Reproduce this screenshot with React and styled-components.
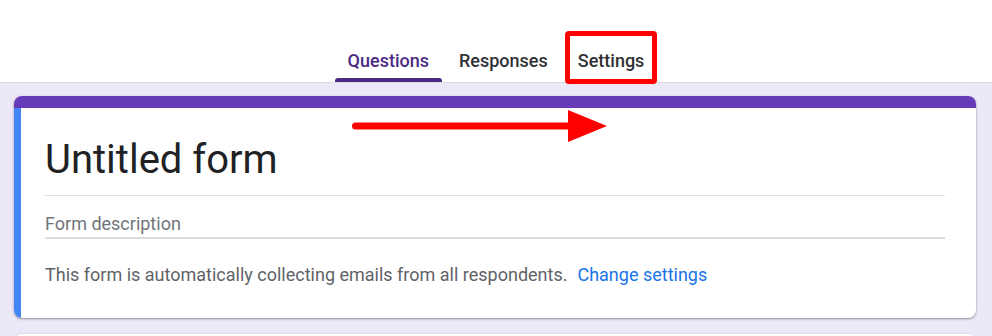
import React from 'react'
import styled, { createGlobalStyle, css } from 'styled-components'

const GlobalStyle = createGlobalStyle`
  html, body {
    margin: 0;
    padding: 0;
    background: #ede8f7;
    font-family: Roboto, "Liberation Sans", Arial, sans-serif;
  }
`

const Header = styled.header`
  background: #fff;
  border-bottom: 1px solid #dadce0;
  height: 82px;
  display: flex;
  justify-content: center;
  align-items: flex-end;
`

const Tabs = styled.nav`
  display: flex;
  gap: 4px;
`

const Tab = styled.div`
  position: relative;
  height: 44px;
  padding: 0 13px;
  display: flex;
  align-items: center;
  font-size: 18px;
  font-weight: 500;
  color: #303134;
  cursor: pointer;

  ${p =>
    p.active &&
    css`
      color: #4b2a85;
      &::before {
        content: '';
        position: absolute;
        left: 0;
        right: 0;
        bottom: 0;
        height: 4px;
        border-radius: 3px 3px 0 0;
        background: #4b2a85;
      }
    `}

  ${p =>
    p.highlight &&
    css`
      &::after {
        content: '';
        position: absolute;
        left: 0;
        right: 0;
        top: -7px;
        bottom: -2px;
        border: 5px solid #ff0000;
        border-radius: 4px;
      }
    `}
`

const Main = styled.main`
  padding: 13px 16px 0 14px;
  display: flex;
  flex-direction: column;
  gap: 16px;
`

const Card = styled.section`
  position: relative;
  background: #fff;
  border-radius: 8px;
  box-shadow: 0 1px 2px rgba(0, 0, 0, 0.3), 0 1px 3px 1px rgba(0, 0, 0, 0.08);
  overflow: hidden;
  min-height: ${p => p.minHeight || 0}px;
`

const TopBar = styled.div`
  height: 12px;
  background: #673ab7;
`

const Body = styled.div`
  border-left: 7px solid #4285f4;
  padding: 28px 31px 31px 24px;
`

const Title = styled.h1`
  margin: 0;
  font-size: 40px;
  font-weight: 400;
  line-height: 48px;
  color: #202124;
  padding-bottom: 11px;
  border-bottom: 1px solid #e0e0e0;
`

const Description = styled.div`
  margin-top: 16px;
  font-size: 18px;
  line-height: 24px;
  color: #70757a;
  padding-bottom: 1px;
  border-bottom: 2px solid #dcdcdc;
`

const Notice = styled.p`
  margin: 24px 0 0;
  font-size: 18px;
  line-height: 24px;
  color: #5f6368;
`

const Link = styled.a`
  margin-left: 10px;
  color: #1a73e8;
  text-decoration: none;
`

const Arrow = styled.svg`
  position: absolute;
  left: 334px;
  top: 13px;
  pointer-events: none;
`

export default function App() {
  return (
    <>
      <GlobalStyle />
      <Header>
        <Tabs>
          <Tab active>Questions</Tab>
          <Tab>Responses</Tab>
          <Tab highlight>Settings</Tab>
        </Tabs>
      </Header>
      <Main>
        <Card>
          <TopBar />
          <Body>
            <Title>Untitled form</Title>
            <Description>Form description</Description>
            <Notice>
              This form is automatically collecting emails from all respondents.
              <Link href="#">Change settings</Link>
            </Notice>
          </Body>
          <Arrow width="262" height="34" viewBox="0 0 262 34">
            <line x1="7.5" y1="17" x2="224" y2="17" stroke="#ff0000" strokeWidth="7" strokeLinecap="round" />
            <polygon points="220,1 259,17 220,33" fill="#ff0000" />
          </Arrow>
        </Card>
        <Card minHeight={60} />
      </Main>
    </>
  )
}
